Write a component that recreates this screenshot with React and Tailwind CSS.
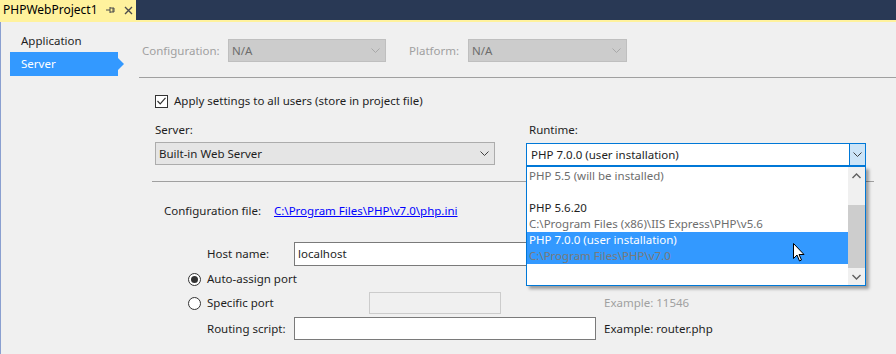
const Chevron = ({ color = "#606060" }) => (
  <svg width="9" height="6" viewBox="0 0 9 6">
    <path d="M0.5 0.5 L4.5 4.5 L8.5 0.5" fill="none" stroke={color} strokeWidth="1" />
  </svg>
);

const Combo = ({ className, text, textClass, chevron }) => (
  <div className={`flex items-center justify-between border h-[23px] ${className}`}>
    <span className={`pl-[3px] ${textClass}`}>{text}</span>
    <span className="pr-[5px] flex items-center">
      <Chevron color={chevron} />
    </span>
  </div>
);

const Radio = ({ checked }) => (
  <div className="w-[13px] h-[13px] rounded-full border border-[#333] bg-white flex items-center justify-center">
    {checked && <div className="w-[7px] h-[7px] rounded-full bg-[#333]" />}
  </div>
);

export default function App() {
  return (
    <div
      className="w-[896px] h-[354px] bg-[#F0F0F0] overflow-hidden text-[11.5px] text-[#1e1e1e] relative"
      style={{ fontFamily: '"Segoe UI", "Noto Sans", Arial, sans-serif' }}
    >
      {/* tab strip */}
      <div className="h-[20px] bg-[#293955] flex">
        <div className="w-[136px] bg-[#FFF29D] flex items-center pl-[3px] text-black text-[12px]">
          <span>PHPWebProject1</span>
          <svg className="ml-[8px]" width="10" height="10" viewBox="0 0 10 10">
            <path d="M0 5 H4 M4 2 V8 M4 3 H8 V7 H4 M7 3 V7" fill="none" stroke="#4d4d4d" strokeWidth="1" />
          </svg>
          <svg className="ml-[8px]" width="9" height="9" viewBox="0 0 9 9">
            <path d="M1 1 L8 8 M8 1 L1 8" stroke="#4d4d4d" strokeWidth="1.4" />
          </svg>
        </div>
      </div>
      <div className="h-[2px] bg-[#FFF29D]" />

      <div className="flex h-[332px] border-l border-[#8A9FD0]">
        {/* left nav */}
        <div className="w-[138px] shrink-0 pt-[8px]">
          <div className="h-[22px] flex items-center pl-[20px]">Application</div>
          <div className="flex items-center ml-[9px]">
            <div className="w-[108px] h-[24px] bg-[#3399FF] text-white flex items-center pl-[11px]">Server</div>
            <div className="w-0 h-0 border-y-[6px] border-y-transparent border-l-[6px] border-l-[#3399FF]" />
          </div>
        </div>

        {/* main */}
        <div className="flex-1 flex flex-col">
          <div className="mt-[17px] flex items-center h-[23px]">
            <span className="ml-[3px] w-[86px] text-[#a0a0a0]">Configuration:</span>
            <Combo className="w-[158px] bg-[#CCCCCC] border-[#BFBFBF]" text="N/A" textClass="text-[#6d6d6d]" chevron="#a8a8a8" />
            <span className="ml-[23px] w-[59px] text-[#a0a0a0]">Platform:</span>
            <Combo className="w-[159px] bg-[#CCCCCC] border-[#BFBFBF]" text="N/A" textClass="text-[#6d6d6d]" chevron="#a8a8a8" />
          </div>
          <div className="mt-[15px] h-px bg-[#A0A0A0]" />

          <div className="pl-[16px]">
            <div className="mt-[16px] flex items-center h-[14px]">
              <div className="w-[13px] h-[13px] border border-[#333] bg-white flex items-center justify-center">
                <svg width="9" height="8" viewBox="0 0 9 8">
                  <path d="M0.5 4 L3.2 6.8 L8.5 0.8" fill="none" stroke="#333" strokeWidth="1.2" />
                </svg>
              </div>
              <span className="ml-[6px]">Apply settings to all users (store in project file)</span>
            </div>

            <div className="mt-[14px] flex gap-[31px]">
              <div className="w-[340px]">
                <div className="h-[16px] leading-[16px]">Server:</div>
                <Combo className="mt-[4px] w-[340px] bg-[#E5E5E5] border-[#ACACAC]" text="Built-in Web Server" textClass="text-[#1e1e1e]" chevron="#404040" />
              </div>
              <div className="w-[340px] relative">
                <div className="h-[16px] leading-[16px] pl-[3px]">Runtime:</div>
                <div className="mt-[5px] w-[340px] h-[23px] bg-white border border-[#0078D7] flex items-center justify-between">
                  <span className="pl-[4px]">PHP 7.0.0 (user installation)</span>
                  <span className="w-[16px] h-full bg-[#CCE4F7] border-l border-[#0078D7] flex items-center justify-center">
                    <Chevron color="#404040" />
                  </span>
                </div>
                {/* dropdown list */}
                <div className="absolute left-0 top-[44px] w-[340px] h-[120px] bg-white border border-[#0078D7] shadow-[3px_3px_3px_rgba(0,0,0,0.35)] z-10 flex">
                  <div className="flex-1 pt-[1px]">
                    <div className="h-[32px] pl-[2px] text-[#6d6d6d] leading-[16px]">PHP 5.5 (will be installed)</div>
                    <div className="h-[32px] pl-[2px] leading-[16px]">
                      <div>PHP 5.6.20</div>
                      <div className="text-[#6d6d6d]">C:\Program Files (x86)\IIS Express\PHP\v5.6</div>
                    </div>
                    <div className="h-[32px] pl-[2px] leading-[16px] bg-[#3399FF] relative">
                      <div className="text-white">PHP 7.0.0 (user installation)</div>
                      <div className="text-[#7a7a7a]">C:\Program Files\PHP\v7.0</div>
                      <svg className="absolute left-[266px] top-[11px]" width="12" height="19" viewBox="0 0 12 19">
                        <path d="M0.5 0.5 L0.5 15.5 L4 12 L6.5 18 L8.5 17 L6 11.5 L11 11.5 Z" fill="white" stroke="black" strokeWidth="1" />
                      </svg>
                    </div>
                  </div>
                  <div className="w-[17px] bg-[#F0F0F0] flex flex-col items-center">
                    <div className="h-[17px] flex items-center justify-center">
                      <svg width="9" height="6" viewBox="0 0 9 6">
                        <path d="M0.5 5 L4.5 1 L8.5 5" fill="none" stroke="#606060" strokeWidth="1.4" />
                      </svg>
                    </div>
                    <div className="mt-[21px] w-full h-[63px] bg-[#CDCDCD]" />
                    <div className="flex-1 flex items-center justify-center">
                      <svg width="9" height="6" viewBox="0 0 9 6">
                        <path d="M0.5 1 L4.5 5 L8.5 1" fill="none" stroke="#606060" strokeWidth="1.4" />
                      </svg>
                    </div>
                  </div>
                </div>
              </div>
            </div>
          </div>

          <div className="mt-[15px] ml-[13px] w-[722px] h-px bg-[#A0A0A0]" />

          <div className="pl-[25px]">
            <div className="mt-[21px] h-[16px] flex items-center">
              <span className="w-[110px]">Configuration file:</span>
              <span className="text-[#0000FF] underline">C:\Program Files\PHP\v7.0\php.ini</span>
            </div>
          </div>

          <div className="mt-[23px] pl-[49px]">
            <div className="flex items-center h-[24px]">
              <span className="ml-[19px] w-[87px]">Host name:</span>
              <div className="w-[300px] h-[24px] bg-white border border-[#7A7A7A] flex items-center pl-[3px]">localhost</div>
            </div>
            <div className="mt-[3px] flex items-center h-[20px]">
              <Radio checked />
              <span className="ml-[6px]">Auto-assign port</span>
            </div>
            <div className="mt-[3px] flex items-center h-[22px]">
              <Radio />
              <span className="ml-[6px] w-[162px]">Specific port</span>
              <div className="w-[132px] h-[22px] bg-[#F0F0F0] border border-[#CCCCCC]" />
              <span className="ml-[103px] text-[#a0a0a0]">Example: 11546</span>
            </div>
            <div className="mt-[3px] flex items-center h-[23px]">
              <span className="ml-[19px] w-[87px]">Routing script:</span>
              <div className="w-[302px] h-[23px] bg-white border border-[#7A7A7A]" />
              <span className="ml-[8px]">Example: router.php</span>
            </div>
          </div>
        </div>
      </div>
    </div>
  );
}
